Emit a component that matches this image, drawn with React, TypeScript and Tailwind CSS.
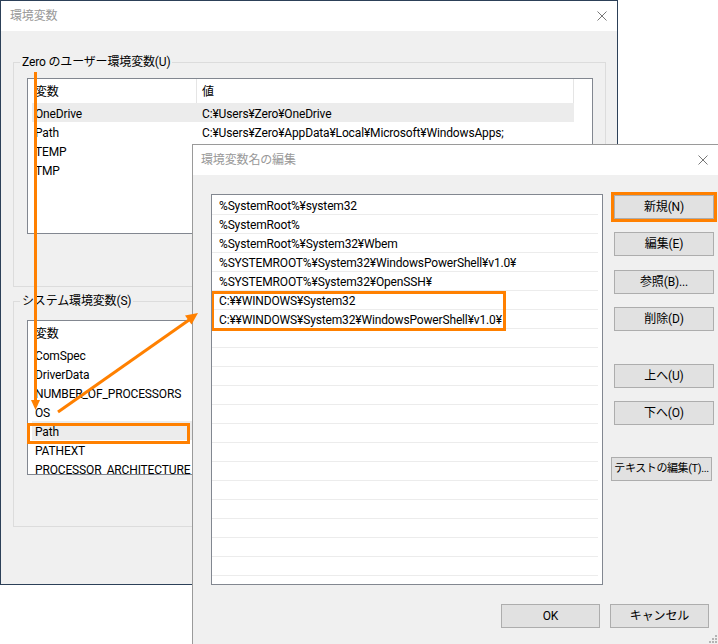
import React from "react";

interface EnvVar {
  name: string;
  value: string;
}

// only the first two values are visible, the rest sit under the edit dialog
const userVars: EnvVar[] = [
  { name: "OneDrive", value: "C:¥Users¥Zero¥OneDrive" },
  { name: "Path", value: "C:¥Users¥Zero¥AppData¥Local¥Microsoft¥WindowsApps;" },
  { name: "TEMP", value: "" },
  { name: "TMP", value: "" },
];

const systemVars: EnvVar[] = [
  { name: "ComSpec", value: "" },
  { name: "DriverData", value: "" },
  { name: "NUMBER_OF_PROCESSORS", value: "" },
  { name: "OS", value: "" },
  { name: "Path", value: "" },
  { name: "PATHEXT", value: "" },
  { name: "PROCESSOR_ARCHITECTURE", value: "" },
];

const pathEntries = [
  "%SystemRoot%¥system32",
  "%SystemRoot%",
  "%SystemRoot%¥System32¥Wbem",
  "%SYSTEMROOT%¥System32¥WindowsPowerShell¥v1.0¥",
  "%SYSTEMROOT%¥System32¥OpenSSH¥",
  "C:¥¥WINDOWS¥System32",
  "C:¥¥WINDOWS¥System32¥WindowsPowerShell¥v1.0¥",
];

function CloseIcon() {
  return (
    <svg width="10" height="10" viewBox="0 0 10 10">
      <path d="M0.5 0.5L9.5 9.5M9.5 0.5L0.5 9.5" stroke="#777" strokeWidth="1" />
    </svg>
  );
}

function Btn({ children, className = "" }: { children: React.ReactNode; className?: string }) {
  return (
    <div
      className={`relative flex h-[24px] items-center justify-center whitespace-nowrap border border-[#adadad] bg-[#e1e1e1] ${className}`}
    >
      {children}
    </div>
  );
}

function VarList({ vars, selected }: { vars: EnvVar[]; selected: string }) {
  return (
    <>
      <div className="flex h-[24px] w-[546px] items-center">
        <div className="flex h-full w-[169px] items-center border-r border-[#e5e5e5] pl-[7px] pt-[2px]">変数</div>
        <div className="flex h-full w-[377px] items-center border-r border-[#e5e5e5] pl-[5px] pt-[2px]">値</div>
      </div>
      {vars.map((v) => (
        <div
          key={v.name}
          className={`ml-[4px] flex h-[19px] w-[542px] items-center whitespace-nowrap pt-[2px] ${
            v.name === selected ? "bg-[#ececec]" : ""
          }`}
        >
          <span className="w-[164px] pl-[3px]">{v.name}</span>
          {v.value && <span className="pl-[6px]">{v.value}</span>}
        </div>
      ))}
    </>
  );
}

function BackWindow() {
  return (
    <div className="absolute left-0 top-0 flex h-[585px] w-[618px] flex-col border border-[#2c4058] bg-[#f0f0f0]">
      <div className="flex h-[30px] shrink-0 items-center justify-between bg-white pl-[9px] pr-[10px]">
        <span className="text-[#999]">環境変数</span>
        <CloseIcon />
      </div>

      <fieldset className="ml-[12px] mt-[23px] w-[593px] border border-[#dcdcdc] pb-[52px]">
        <legend className="ml-[6px] px-[2px]">Zero のユーザー環境変数(U)</legend>
        <div className="ml-[13px] mt-[8px] h-[156px] w-[566px] overflow-hidden border border-[#828790] bg-white">
          <VarList vars={userVars} selected="OneDrive" />
        </div>
      </fieldset>

      <fieldset className="ml-[12px] mt-[6px] w-[593px] border border-[#dcdcdc] pb-[51px]">
        <legend className="ml-[6px] px-[2px]">システム環境変数(S)</legend>
        <div className="relative ml-[13px] mt-[11px] h-[155px] w-[566px] overflow-hidden border border-[#828790] bg-white">
          <VarList vars={systemVars} selected="Path" />
        </div>
      </fieldset>

      {/* highlight round the Path row */}
      <div className="absolute left-[26px] top-[422px] h-[21px] w-[163px] border-[3px] border-[#ff8000]" />
    </div>
  );
}

function EditWindow() {
  return (
    <div className="absolute left-[192px] top-[144px] flex h-[501px] w-[528px] flex-col border border-[#9a9a9a] bg-[#f0f0f0]">
      <div className="flex h-[30px] shrink-0 items-center justify-between bg-white pl-[8px] pr-[11px]">
        <span className="text-[#999]">環境変数名の編集</span>
        <CloseIcon />
      </div>

      <div className="flex pl-[18px] pt-[19px]">
        <div className="relative h-[391px] w-[392px] overflow-hidden border border-[#828790] bg-white pt-[1px]">
          {Array.from({ length: 20 }).map((_, i) => (
            <div
              key={i}
              className="mr-[4px] flex h-[19px] items-center whitespace-nowrap border-b border-[#ececec] pl-[7px] pt-[2px]"
            >
              {pathEntries[i] ?? ""}
            </div>
          ))}
          <div className="absolute left-[-1px] top-[96px] h-[40px] w-[295px] border-[3px] border-[#ff8000]" />
        </div>

        <div className="ml-[11px] flex w-[100px] flex-col pt-[1px]">
          <Btn>
            新規(N)
            <span className="absolute -inset-[4px] border-[3px] border-[#ff8000]" />
          </Btn>
          <Btn className="mt-[13px]">編集(E)</Btn>
          <Btn className="mt-[14px]">参照(B)...</Btn>
          <Btn className="mt-[13px]">削除(D)</Btn>
          <Btn className="mt-[33px]">上へ(U)</Btn>
          <Btn className="mt-[13px]">下へ(O)</Btn>
          <Btn className="-ml-[3px] mt-[32px] w-[101px] text-[11px] tracking-[-0.4px]">テキストの編集(T)...</Btn>
        </div>
      </div>

      <div className="mt-[19px] flex gap-[10px] pl-[308px]">
        <Btn className="w-[99px]">OK</Btn>
        <Btn className="w-[99px]">キャンセル</Btn>
      </div>

      <svg className="absolute bottom-[1px] right-[2px]" width="9" height="9" viewBox="0 0 9 9">
        <g fill="#b4b4b4">
          <rect x="7" y="1" width="2" height="2" />
          <rect x="4" y="4" width="2" height="2" />
          <rect x="7" y="4" width="2" height="2" />
          <rect x="1" y="7" width="2" height="2" />
          <rect x="4" y="7" width="2" height="2" />
          <rect x="7" y="7" width="2" height="2" />
        </g>
      </svg>
    </div>
  );
}

function Arrows() {
  return (
    <svg className="pointer-events-none absolute left-0 top-0" width="718" height="644" viewBox="0 0 718 644">
      <g stroke="#ff8000" strokeWidth="3" fill="#ff8000">
        <line x1="35.5" y1="72" x2="35.5" y2="402" />
        <line x1="58" y1="412" x2="189" y2="320" />
      </g>
      <g fill="#ff8000">
        <polygon points="31,400 40,400 35.5,410" />
        <polygon points="198,313 191.5,324.5 185,315.5" />
      </g>
    </svg>
  );
}

export default function App() {
  return (
    <div className="relative h-[644px] w-[718px] overflow-hidden bg-white font-['Roboto','Noto_Sans_CJK_JP',sans-serif] text-[12px] leading-[16px] tracking-[-0.15px] text-black">
      <BackWindow />
      <EditWindow />
      <Arrows />
    </div>
  );
}
